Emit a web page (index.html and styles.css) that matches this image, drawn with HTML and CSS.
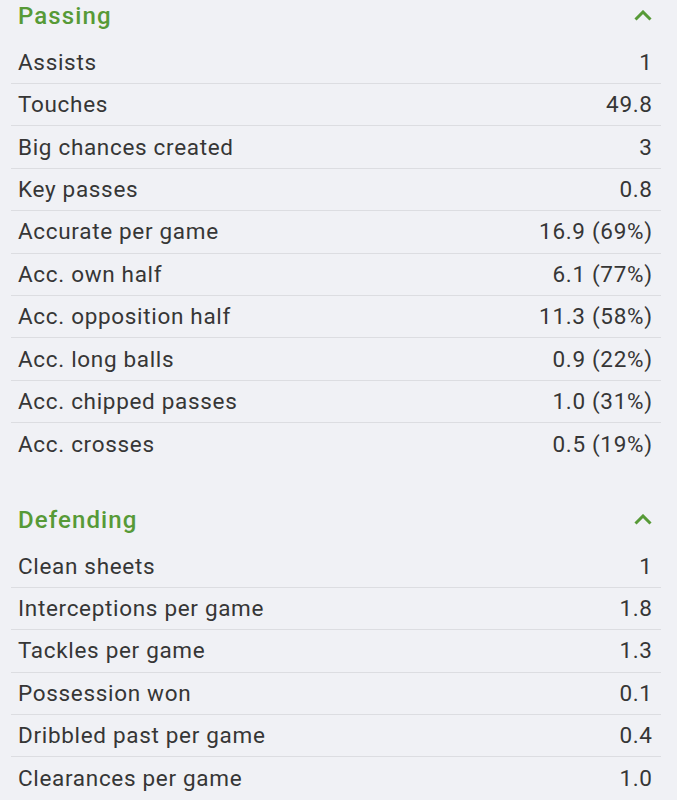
FILE: index.html
```html
<!DOCTYPE html>
<html>
<head>
<meta charset="utf-8">
<link rel="stylesheet" href="styles.css">
</head>
<body>
<div class="page">
  <section class="section">
    <div class="section-head">
      <h2 class="section-title">Passing</h2>
      <svg class="chevron" width="18" height="11" viewBox="0 0 18 11"><path d="M1.5 9.5 L9 2 L16.5 9.5" fill="none" stroke="#579a37" stroke-width="3"/></svg>
    </div>
    <div class="row"><span>Assists</span><span>1</span></div>
    <div class="row"><span>Touches</span><span>49.8</span></div>
    <div class="row"><span>Big chances created</span><span>3</span></div>
    <div class="row"><span>Key passes</span><span>0.8</span></div>
    <div class="row"><span>Accurate per game</span><span>16.9 (69%)</span></div>
    <div class="row"><span>Acc. own half</span><span>6.1 (77%)</span></div>
    <div class="row"><span>Acc. opposition half</span><span>11.3 (58%)</span></div>
    <div class="row"><span>Acc. long balls</span><span>0.9 (22%)</span></div>
    <div class="row"><span>Acc. chipped passes</span><span>1.0 (31%)</span></div>
    <div class="row"><span>Acc. crosses</span><span>0.5 (19%)</span></div>
  </section>
  <section class="section">
    <div class="section-head">
      <h2 class="section-title">Defending</h2>
      <svg class="chevron" width="18" height="11" viewBox="0 0 18 11"><path d="M1.5 9.5 L9 2 L16.5 9.5" fill="none" stroke="#579a37" stroke-width="3"/></svg>
    </div>
    <div class="row"><span>Clean sheets</span><span>1</span></div>
    <div class="row"><span>Interceptions per game</span><span>1.8</span></div>
    <div class="row"><span>Tackles per game</span><span>1.3</span></div>
    <div class="row"><span>Possession won</span><span>0.1</span></div>
    <div class="row"><span>Dribbled past per game</span><span>0.4</span></div>
    <div class="row"><span>Clearances per game</span><span>1.0</span></div>
  </section>
</div>
</body>
</html>
```
FILE: styles.css
```css
html, body {
  margin: 0;
  padding: 0;
  background: #f0f1f5;
}
body {
  font-family: Roboto, "Liberation Sans", sans-serif;
  color: #363636;
  overflow: hidden;
}
.page {
  margin-top: -10.4px;
  padding: 0 16px 0 11px;
}
.section {
  margin-bottom: 28px;
}
.section-head {
  height: 52px;
  display: flex;
  align-items: center;
  justify-content: space-between;
  padding: 0 9px 0 7px;
}
.section-title {
  margin: 0;
  font-size: 24px;
  font-weight: 500;
  letter-spacing: 1.1px;
  color: #579a37;
  line-height: 1;
}
.chevron {
  display: block;
}
.row {
  box-sizing: border-box;
  height: 42.4px;
  display: flex;
  align-items: center;
  justify-content: space-between;
  padding: 0 9px 1px 7px;
  border-bottom: 1.5px solid #dcdde1;
  font-size: 22.5px;
  letter-spacing: 0.68px;
}
.row span:last-child {
  margin-right: -0.68px;
}
.row:last-child {
  border-bottom: none;
}
```
